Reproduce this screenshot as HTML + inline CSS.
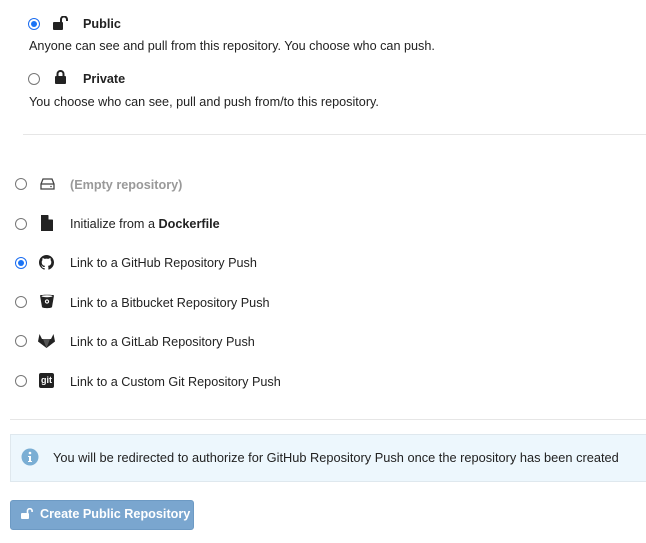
<!DOCTYPE html>
<html><head><meta charset="utf-8"><style>
*{box-sizing:border-box;margin:0;padding:0}
body{width:646px;height:543px;background:#fff;font-family:"Liberation Sans",sans-serif;font-size:12.65px;color:#222;position:relative;overflow:hidden}
.a{position:absolute;white-space:nowrap}
.r{position:absolute;width:12px;height:12px;border:1px solid #777;border-radius:50%;background:#fff}
.r.on{border:1px solid #1a6cf0;background:#fff}
.r.on::after{content:"";position:absolute;left:2px;top:2px;width:6px;height:6px;border-radius:50%;background:#1a73f5}
.hr{position:absolute;height:1px;background:#e6e6e6}
</style></head><body>
<div class="r on" style="left:28px;top:18px"></div>
<svg class="a" style="left:53px;top:16px" width="18" height="14" viewBox="0 0 18 14"><rect x="0" y="6" width="10" height="8" rx="1" fill="#222"/><path d="M8 6V3.5a3 3 0 0 1 6 0V5" stroke="#222" stroke-width="2" fill="none"/></svg>
<div class="a" style="left:83px;top:17px;font-weight:bold">Public</div>
<div class="a" style="left:29px;top:39px">Anyone can see and pull from this repository. You choose who can push.</div>
<div class="r" style="left:28px;top:73px"></div>
<svg class="a" style="left:55px;top:70px" width="12" height="14" viewBox="0 0 12 14"><rect x="0" y="6" width="11" height="8" rx="1" fill="#222"/><path d="M2.5 6.5V4a3 3 0 0 1 6 0v2.5" stroke="#222" stroke-width="2" fill="none"/></svg>
<div class="a" style="left:83px;top:72px;font-weight:bold">Private</div>
<div class="a" style="left:29px;top:95px">You choose who can see, pull and push from/to this repository.</div>
<div class="hr" style="left:23px;right:0;top:134px"></div>

<div class="r" style="left:15px;top:178px"></div>
<svg class="a" style="left:40px;top:178px" width="15" height="12" viewBox="0 0 15 12"><path d="M3 1h9l2 5v5H1V6z" fill="none" stroke="#444" stroke-width="1.3"/><line x1="1" y1="6" x2="14" y2="6" stroke="#444" stroke-width="1.3"/><circle cx="11" cy="8.5" r=".8" fill="#444"/></svg>
<div class="a" style="left:70px;top:178px;color:#999;font-weight:bold">(Empty repository)</div>

<div class="r" style="left:15px;top:218px"></div>
<svg class="a" style="left:41px;top:215px" width="12" height="16" viewBox="0 0 12 16"><path d="M0 0h7l5 5v11H0z" fill="#222"/><path d="M7.5 0v4.5h4.5" fill="#fff"/></svg>
<div class="a" style="left:70px;top:217px">Initialize from a <b>Dockerfile</b></div>

<div class="r on" style="left:15px;top:257px"></div>
<svg class="a" style="left:39px;top:255px" width="15" height="15" viewBox="0 0 16 16"><path fill="#222" d="M8 0C3.58 0 0 3.58 0 8c0 3.54 2.29 6.530 5.47 7.59.4.07.55-.17.55-.38v-1.33c-2.230.48-2.7-1.07-2.7-1.07-.36-.92-.89-1.17-.89-1.170-.73-.5.06-.49.06-.49.8.06 1.23.83 1.23.83.71 1.22 1.87.87 2.33.66.07-.52.28-.87.51-1.07-1.78-.2-3.64-.89-3.64-3.95 0-.87.31-1.59.82-2.15-.08-.2-.36-1.02.08-2.12 0 0 .67-.21 2.2.82a7.6 7.6 0 0 1 4 0c1.53-1.04 2.2-.82 2.2-.82.44 1.1.16 1.92.08 2.12.51.56.82 1.270.82 2.15 0 3.07-1.87 3.75-3.65 3.95.29.25.54.73.54 1.48v2.2c0 .21.15.46.55.38A8 8 0 0 0 16 8c0-4.42-3.58-8-8-8z"/></svg>
<div class="a" style="left:70px;top:256px">Link to a GitHub Repository Push</div>

<div class="r" style="left:15px;top:296px"></div>
<svg class="a" style="left:40px;top:294px" width="14" height="15" viewBox="0 0 14 15"><path d="M0 1.5C0 .5 14 .5 14 1.5L12 13c-.3 1.5-9.7 1.5-10 0z" fill="#222"/><ellipse cx="7" cy="2.2" rx="5.5" ry="1" fill="#fff"/><circle cx="7" cy="7.5" r="1.6" fill="none" stroke="#fff" stroke-width="1.1"/></svg>
<div class="a" style="left:70px;top:296px">Link to a Bitbucket Repository Push</div>

<div class="r" style="left:15px;top:335px"></div>
<svg class="a" style="left:38px;top:333px" width="17" height="15" viewBox="0 0 17 15"><path d="M8.5 15L0 8.5 1.5 1l2.5 5h9l2.5-5L17 8.5z" fill="#222"/><path d="M8.5 15L5 6h7z" fill="#555"/></svg>
<div class="a" style="left:70px;top:335px">Link to a GitLab Repository Push</div>

<div class="r" style="left:15px;top:375px"></div>
<div class="a" style="left:39px;top:373px;width:15px;height:15px;background:#222;border-radius:2px;color:#fff;font-size:9px;font-weight:bold;text-align:center;line-height:14px">git</div>
<div class="a" style="left:70px;top:375px">Link to a Custom Git Repository Push</div>

<div class="hr" style="left:10px;right:0;top:419px"></div>
<div class="a" style="left:10px;top:434px;width:640px;height:48px;background:#edf7fd;border:1px solid #dfe8ee"></div>
<svg class="a" style="left:21px;top:448px" width="18" height="18" viewBox="0 0 18 18"><circle cx="9" cy="9" r="8.5" fill="#7aaed4"/><circle cx="9" cy="5" r="1.3" fill="#fff"/><path d="M7 8h3v5h1v1H7v-1h1V9H7z" fill="#fff"/></svg>
<div class="a" style="left:53px;top:450px;font-size:12.8px">You will be redirected to authorize for GitHub Repository Push once the repository has been created</div>

<div class="a" style="left:10px;top:500px;width:184px;height:30px;background:#7aa6cf;border-radius:3px;border:1px solid #6d9ac4"></div>
<svg class="a" style="left:21px;top:508px" width="14" height="12" viewBox="0 0 14 12"><rect x="0" y="5" width="8" height="6" rx="1" fill="#fff"/><path d="M6.5 5V3a2.3 2.3 0 0 1 4.6 0v1" stroke="#fff" stroke-width="1.6" fill="none"/></svg>
<div class="a" style="left:40px;top:507px;color:#fff;font-weight:bold">Create Public Repository</div>
</body></html>
